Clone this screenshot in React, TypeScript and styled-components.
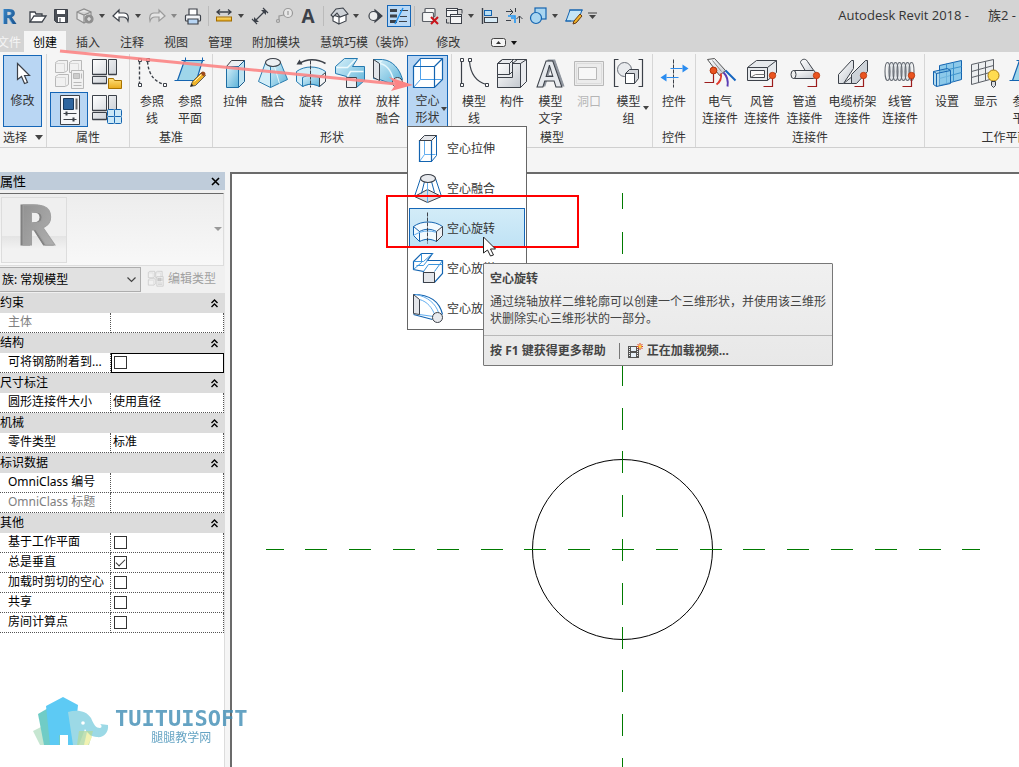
import React from "react";
import styled, { createGlobalStyle, css } from "styled-components";

const Global = createGlobalStyle`
  *, *::before, *::after { box-sizing: border-box; }
  body {
    margin: 0;
    background: #f5f5f5;
    color: #333;
    font: 12px/17px "Open Sans", "Noto Sans CJK SC", sans-serif;
  }
  button, select, input { font: inherit; color: inherit; margin: 0; padding: 0; border-radius: 0; }
  button { background: none; border: 0; }
`;

/* ---------- icons ---------- */

const dark = "#3c4149";
const blue = "#1464b0";

const HiddenSvg = styled.svg`
  position: absolute;
  width: 0;
  height: 0;
`;

const Defs = () => (
  <HiddenSvg aria-hidden="true">
    <defs>
      <linearGradient id="aqua" x1="0" y1="0" x2="1" y2="1">
        <stop offset="0" stopColor="#d8f1fa" />
        <stop offset="1" stopColor="#5cb2d8" />
      </linearGradient>
      <linearGradient id="steel" x1="0" y1="0" x2="1" y2="1">
        <stop offset="0" stopColor="#ffffff" />
        <stop offset="1" stopColor="#c3c8cf" />
      </linearGradient>
      <linearGradient id="gold" x1="0" y1="0" x2="0" y2="1">
        <stop offset="0" stopColor="#ffe07a" />
        <stop offset="1" stopColor="#e9ab1c" />
      </linearGradient>
      <linearGradient id="logoBlue" x1="0" y1="0" x2="1" y2="1">
        <stop offset="0" stopColor="#3f8fd0" />
        <stop offset="1" stopColor="#164c86" />
      </linearGradient>
      <linearGradient id="logoGray" x1="0" y1="0" x2="1" y2="1">
        <stop offset="0" stopColor="#8a8a8a" />
        <stop offset="1" stopColor="#b4b4b4" />
      </linearGradient>
    </defs>
  </HiddenSvg>
);

const connector = (x: number, y: number) => (
  <>
    <path d={`M${x} ${y}v11h-9`} fill="none" stroke="#9c1c1c" strokeWidth="1.2" />
    <circle cx={x} cy={y} r="3.2" fill="#ea5420" stroke="#b23208" strokeWidth=".8" />
  </>
);

const panes = (
  <g fill="url(#steel)" stroke={dark}>
    <path d="M1 1h14v15H1zM17 1h8v15h-8zM1 25v-7h14v7z" />
    <path d="M1 16h14M17 16h8M1 25h14" strokeWidth="1.600" />
  </g>
);

const lineEnds = (
  <g fill="#fff">
    <path d="M2 1h3v3H2zM2 26h3v3H2zM10 1h3v3h-3zM27 26h3v3h-3z" />
  </g>
);

const icons: Record<string, React.ReactNode> = {
  open: (
    <g fill="#fff" stroke={dark} strokeWidth="1.3">
      <path d="M3 16V6h5l1 2h6v3" />
      <path d="M3 16l4-6h12l-4 6z" />
    </g>
  ),
  save: (
    <>
      <path d="M3.500 3.500h13v13h-11l-2-2z" fill="#4b4f56" stroke={dark} />
      <rect x="6" y="4" width="8" height="4" fill="#fff" />
      <rect x="7" y="11" width="7" height="5" fill="#fff" />
      <path d="M9 12v4" stroke={dark} />
    </>
  ),
  sync: (
    <g fill="#e4e4e4" stroke="#8d8d8d" strokeWidth="1.2">
      <path d="M2 6l7-3 7 3v7l-7 4-7-4zM2 6l7 3 7-3M9 9v8" />
      <circle cx="14" cy="13" r="4" fill="#8f8f8f" />
      <path d="M12 13h4M14 11v4" stroke="#eee" />
    </g>
  ),
  undo: <path d="M2 10l6-6v3h5c4 0 5 4 4 8-1-3-2-4-5-4H8v4z" fill="#fff" stroke={dark} strokeWidth="1.2" />,
  redo: <path d="M18 10l-6-6v3H7c-4 0-5 4-4 8 1-3 2-4 5-4h4v4z" fill="#e4e4e4" stroke="#9b9b9b" strokeWidth="1.2" />,
  print: (
    <g stroke={dark} strokeWidth="1.2">
      <path d="M6 9V3h8v6" fill="#fff" />
      <rect x="2.500" y="9" width="15" height="6" rx="1" fill="#f4f6f9" />
      <path d="M5 13h10v5H5z" fill="#b9d6f4" />
    </g>
  ),
  measure: (
    <>
      <path d="M3 6h14M6 3.500L3 6l3 2.500M14 3.500L17 6l-3 2.500" fill="none" stroke={dark} strokeWidth="1.3" />
      <rect x="2.500" y="11" width="15" height="4" fill="url(#gold)" stroke="#a06b00" />
    </>
  ),
  dimension: (
    <>
      <path d="M5 15L15 5M2 13l5 5M13 2l5 5" fill="none" stroke={dark} strokeWidth="1.2" />
      <path d="M4 16v-5l5 5zM16 4v5l-5-5z" fill={dark} />
    </>
  ),
  tag: (
    <g fill="none" stroke="#999" strokeWidth="1.2">
      <circle cx="14" cy="7" r="4.500" fill="#e6e6e6" />
      <path d="M14 5v4M10 9L5 10v4" />
      <circle cx="4" cy="15" r="1.500" />
    </g>
  ),
  text: (
    <text x="10" y="17" textAnchor="middle" fontFamily="Open Sans" fontWeight="700" fontSize="19" fill={dark}>
      A
    </text>
  ),
  house: (
    <g stroke={dark} strokeWidth="1.1" fill="#fff">
      <path d="M4 9v6l6 3v-7zM10 11l7-3v7l-7 3z" />
      <path d="M2 9l5-6 7-1 5 6-8 3-3-4-4 4z" fill="#cfd3d8" />
    </g>
  ),
  section: (
    <g stroke={dark} strokeWidth="1.2">
      <path d="M10 4l7 6-7 6z" fill={dark} />
      <circle cx="8.500" cy="10" r="4.500" fill="#eee" />
    </g>
  ),
  thin: (
    <>
      <path d="M1 4.500h7M1 10h7M1 15.500h7" stroke={dark} strokeWidth="3" />
      <path d="M11 4.500h8M11 10.500h7M10 15.500h8" stroke={dark} />
      <path d="M6 18L14 2" stroke="#1d8dea" strokeWidth="1.4" />
    </>
  ),
  closeHidden: (
    <>
      <g fill="#f5f5f5" stroke="#5b5f66" strokeWidth="1.2">
        <rect x="5" y="2.500" width="10" height="8" rx="1" />
        <rect x="2.500" y="6.500" width="11" height="9" rx="1" />
      </g>
      <path d="M11 11l7 7M18 11l-7 7" stroke="#c9141b" strokeWidth="2" />
    </>
  ),
  switchWin: (
    <g fill="#f5f5f5" stroke={dark}>
      <rect x="2.500" y="2.500" width="11" height="8" />
      <path d="M2.500 4.500h11" />
      <rect x="6.500" y="8.500" width="11" height="9" />
      <path d="M6.500 10.500h11M2.500 13v4h3M14 3.500h4v4" fill="none" />
    </g>
  ),
  align: (
    <>
      <path d="M2.500 2v16" stroke={dark} strokeWidth="1.400" />
      <rect x="4.500" y="4.500" width="7" height="5" fill="#b9dff4" stroke={blue} />
      <rect x="4.500" y="11.500" width="13" height="5" fill="#d8ebf6" stroke={dark} />
    </>
  ),
  offset: (
    <>
      <path d="M2 5.500h7M6 3l3 3-3 3M15.500 17v-7M12.500 13l3-3 3 3M11.500 2v4M2 14.500h5" fill="none" stroke={dark} />
      <path d="M4 10h7v7M7 12h3" fill="none" stroke="#2196f3" strokeWidth="1.600" />
    </>
  ),
  join: (
    <g fill="#a9d5f0" stroke={blue} strokeWidth="1.200">
      <rect x="7" y="2" width="11" height="11" />
      <circle cx="8" cy="12" r="5.500" />
    </g>
  ),
  plane20: (
    <>
      <path d="M2 15L6 4h12l-4 11z" fill="#c5e6f6" stroke={blue} />
      <path d="M1 15h6M5 4h14" stroke={blue} />
      <path d="M9 18l1-3 6-7 2 2-6 7z" fill="#f0b429" stroke="#6a3a10" />
    </>
  ),
  modify: <path d="M10 6v16l4-3 3 7 3-1-3-7h5z" fill="#fff" stroke={dark} strokeWidth="1.200" />,
  types: (
    <g fill="#f1f1f1" stroke="#b9b9b9">
      <path d="M2 4l3-2h9v10l-3 2H2zM16 4l3-2h9v10l-3 2h-9zM2 18l3-2h10v10l-3 2H2z" />
      <path d="M2 5h9v9M16 5h9v9M2 19h10v9" fill="none" stroke="#d8d8d8" />
      <path d="M18 12h12v18H18z" />
      <path d="M20 15h6v5h-6z" fill="#ccc" />
      <path d="M20 24h8M20 27h8M28 15v5" />
    </g>
  ),
  family: (
    <>
      {panes}
      <path d="M17 20h5l1 2h7v8H17z" fill="url(#gold)" stroke="#a87300" />
    </>
  ),
  props: (
    <>
      <path d="M7 1h19v29H7z" fill="#f5f6f9" stroke={dark} />
      <path d="M10 4h10v11H10z" fill="#2f66a0" stroke="#17395e" />
      <path d="M23 4v11" stroke="#666" strokeWidth="2" />
      <path d="M10 19h13M10 25h13" stroke={dark} />
      <path d="M13 17v4M20 23v4" stroke={dark} strokeWidth="2" />
    </>
  ),
  categories: (
    <>
      {panes}
      <g fill="#cbe8f7" stroke={blue}>
        <rect x="16" y="15" width="7" height="7" rx="1" />
        <rect x="23" y="15" width="7" height="7" rx="1" />
        <rect x="16" y="22" width="7" height="7" rx="1" />
        <rect x="23" y="22" width="7" height="7" rx="1" />
      </g>
    </>
  ),
  refLine: (
    <g fill="none" stroke={dark}>
      <path d="M3 4v22M11 4c1 12 6 20 17 23" strokeDasharray="3 2" strokeWidth="1.400" />
      {lineEnds}
    </g>
  ),
  refPlane: (
    <>
      <path d="M3 23L10 3h18l-6 20z" fill="#9fd6ea" stroke={blue} strokeWidth="1.200" />
      <path d="M0 23h6M7 3h23M11 0v4M28 0v4" stroke={blue} />
      <path d="M16 29l2-5 9-9 4 3-10 10z" fill="#f0b429" stroke={dark} strokeWidth=".8" />
      <path d="M26 16l2-2q3 0 3 3l-2 2z" fill="#9c4a1c" />
      <path d="M16 29l1-3 2 2z" fill="#222" />
      <path d="M20 24l7-7" stroke="#fff3c0" />
    </>
  ),
  extrude: (
    <g stroke={dark}>
      <path d="M7 9l5-6h13l-6 6z" fill="#eceff2" />
      <path d="M19 9l6-6v21l-6 6z" fill="#bfe4f2" stroke="#1d5c8c" />
      <path d="M7 9h12v21H7z" fill="url(#aqua)" stroke="#1d6ea4" />
    </g>
  ),
  blend: (
    <g stroke="#2c7cae">
      <path d="M8 5L1 24l12 6V9z" fill="#d3eef8" />
      <path d="M13 9v21l17-8-7-17z" fill="url(#aqua)" />
      <path d="M17 9l5 17" stroke="#e8f8fc" />
      <ellipse cx="15.500" cy="5" rx="7.500" ry="4" fill="#eceff2" stroke={dark} strokeWidth="1.200" />
    </g>
  ),
  revolve: (
    <>
      <path d="M1 14c8-6 21-6 29 0v10l-6 5c-6-3-11-3-17 0l-6-5z" fill="#d3eef8" stroke="#2479b0" />
      <path d="M7 20c6-3 11-3 17 0v9c-6-3-11-3-17 0z" fill="url(#aqua)" stroke="#2479b0" />
      <path d="M24 20l6-5v9l-6 5z" fill="#f2f4f6" stroke={dark} />
      <path d="M15 3v27" stroke={dark} strokeDasharray="4 1" />
      <path d="M30 6C22 1 11 1 4 6" fill="none" stroke={dark} strokeWidth="1.600" />
      <path d="M1 7l3-5 3 5z" fill={dark} />
    </>
  ),
  sweep: (
    <>
      <path d="M10 1h13l-5 8h12v14l-8 7H12V19L1 16V9z" fill="url(#aqua)" stroke="#2479b0" />
      <path d="M2 10h11l8-8M13 19l3-5h13" fill="none" stroke="#eefafd" strokeWidth="1.600" />
      <path d="M12 20h10v10H12z" fill="#eef0f3" stroke={dark} />
    </>
  ),
  sweptBlend: (
    <>
      <path d="M1 2h9c10 1 17 9 20 20l-9 5L7 22l-6-1z" fill="url(#aqua)" stroke="#2479b0" />
      <path d="M7 6c8 1 12 9 14 16M7 6l2-3" fill="none" stroke="#e6f7fc" strokeWidth="1.400" />
      <path d="M1 2l6 4v17l-6-3z" fill="#e2e5e9" stroke={dark} />
      <circle cx="25" cy="25" r="5" fill="#dfe3e8" stroke={dark} />
    </>
  ),
  hollowCube: (
    <>
      <path d="M8 1h22v21l-8 8H1V9z" fill="#fff" />
      <path d="M8 2v20h21M8 22l-7 8" fill="none" stroke="#4da0ea" />
      <path d="M1 9l7-8h22v21l-8 8H1zM1 9h21v21M22 9l8-8" fill="none" stroke={blue} strokeWidth="1.200" />
    </>
  ),
  hExtrude: (
    <>
      <path d="M12 3v19h11M12 22l-5 7" fill="none" stroke="#62aef0" />
      <path d="M7 8h12v21H7z" fill="none" stroke={blue} strokeWidth="1.200" />
      <path d="M19 8l5-5v20l-5 6z" fill="none" stroke={blue} />
      <path d="M7 8l5-5h12l-5 5z" fill="#e4e6ea" stroke={dark} />
    </>
  ),
  hBlend: (
    <>
      <path d="M2 24l13-7 14 7-14 6z" fill="#dcdfe4" stroke={dark} />
      <path d="M8 6L2 24M23 6l6 18M12 9L9 21M19 9l3 11" fill="none" stroke={blue} />
      <path d="M15 10v20" stroke="#62aef0" />
      <ellipse cx="15.500" cy="6" rx="7.500" ry="4" fill="#e8eaee" stroke={dark} strokeWidth="1.200" />
    </>
  ),
  hRevolve: (
    <>
      <path d="M1 14c8-6 21-6 29 0v9l-6 6c-6-3-11-3-17 0l-6-6z" fill="#f2fafe" stroke={blue} />
      <path d="M1 14l6 5v10M7 19c6-3 11-3 17 0" fill="none" stroke={blue} />
      <path d="M1 23c9-6 20-6 29 0" fill="none" stroke="#62aef0" />
      <path d="M24 19l6-5v9l-6 6z" fill="#eef0f3" stroke={dark} />
      <path d="M15 0v31" stroke={dark} strokeDasharray="4 1" />
    </>
  ),
  hSweep: (
    <>
      <path d="M9 1h11l-5 7h15v13l-8 9H11V19L1 17V9z" fill="#fff" stroke={blue} strokeWidth="1.200" />
      <path d="M1 9h10l9-8M9 1v9l-8 7M11 19l5-7h14M22 19l8-11M15 8l-4 5H4" fill="none" stroke="#3b94dc" />
      <path d="M11 20h11v10H11z" fill="#e4e6ea" stroke={dark} />
    </>
  ),
  hSwept: (
    <>
      <path d="M1 2c17 0 26 7 29 20M1 22l19 5" fill="none" stroke={blue} strokeWidth="1.200" />
      <path d="M7 7c8 2 13 9 15 15M3 2c12 2 20 9 23 18M7 22l14 2" fill="none" stroke="#62aef0" />
      <path d="M1 2l6 5v15l-6-1z" fill="#e4e6ea" stroke={dark} />
      <circle cx="25" cy="25" r="5" fill="#e8eaee" stroke={dark} />
    </>
  ),
  modelLine: (
    <g fill="none" stroke={dark}>
      <path d="M3 4v22M11 4c1 12 6 20 17 23" strokeWidth="1.200" />
      {lineEnds}
    </g>
  ),
  component: (
    <g stroke={dark} fill="url(#steel)">
      <path d="M1 6l5-4h9l3 0h12v22l-6 6H1z" fill="#e9ebee" />
      <path d="M1 6h12v11H1zM16 6h8v24H1V20h15z" />
      <path d="M13 6l4-4M13 17l3-3V4M1 6l5-4M16 6l5-4M24 6l6-4M24 30l6-6" fill="none" />
    </g>
  ),
  modelText: (
    <text
      x="14"
      y="29"
      textAnchor="middle"
      fontFamily="Open Sans"
      fontWeight="700"
      fontSize="36"
      fill="#e6e9ed"
      stroke={dark}
      filter="drop-shadow(2px -1px 0 #8f959e)"
    >
      A
    </text>
  ),
  opening: (
    <g fill="#ececec" stroke="#b8b8b8">
      <path d="M1 4h29v24H1z" />
      <path d="M5 10h18v12H5z" fill="#f7f7f7" />
      <path d="M3 6h25v20H3z" fill="none" stroke="#dcdcdc" />
    </g>
  ),
  group: (
    <g stroke={dark}>
      <path d="M5 2H1v27h4M25 2h4v27h-4" fill="none" strokeWidth="1.200" />
      <circle cx="11" cy="12" r="7" fill="#e9ebee" stroke="#6b7079" />
      <path d="M12 16l4-4h9v9l-4 5h-9z" fill="#d3d6db" />
      <path d="M12 16h9v10h-9z" fill="#fff" />
    </g>
  ),
  control: (
    <>
      <path d="M15 2v28" stroke={dark} strokeDasharray="4 1" />
      <path d="M12 11h12M8 20h12" stroke="#2a8cf0" strokeWidth="1.200" />
      <path d="M24 7l6 4-6 4zM8 16l-6 4 6 4z" fill="#2a8cf0" />
    </>
  ),
  electric: (
    <>
      <path d="M3 2l7-1 11 12-6 5z" fill="url(#steel)" stroke="#555" />
      <path d="M8 3l9 11" stroke="#888" />
      <path d="M21 13l10 10" stroke="#1565c0" strokeWidth="2" />
      <path d="M19 15c4 4 5 8 4 14" fill="none" stroke="#5b3db4" strokeWidth="2" />
      <path d="M16 16c2 4-1 9-4 11" fill="none" stroke="#e03a2c" strokeWidth="2" />
      <path d="M9 13v12H0" fill="none" stroke="#9c1c1c" strokeWidth="1.200" />
      <circle cx="9" cy="13" r="3.400" fill="#ea5420" stroke="#b23208" />
    </>
  ),
  duct: (
    <>
      <path d="M1 10l9-7h20v12l-9 8H1z" fill="#e6e9ec" stroke={dark} />
      <path d="M1 10h20v13M21 10l9-7" fill="none" stroke={dark} />
      <path d="M4 13h14v7H4z" fill="#fbfbfb" stroke={dark} />
      <path d="M4 20l5-3h9" fill="none" stroke="#777" />
      {connector(26, 18)}
    </>
  ),
  pipe: (
    <>
      <path d="M11 5c0-3 5-5 7-1l9 13h-9z" fill="url(#steel)" stroke={dark} />
      <path d="M4 13h20c4 2 4 7 0 8H4z" fill="url(#steel)" stroke={dark} />
      <ellipse cx="4" cy="17" rx="2.500" ry="4" fill="#eee" stroke={dark} />
      {connector(27, 18)}
    </>
  ),
  tray: (
    <>
      <path d="M6 26l10-8h8l-8 8z" fill="#dfe2e6" stroke={dark} />
      <path d="M1 17L14 3h2v8L6 26H1z" fill="url(#steel)" stroke={dark} />
      <path d="M14 17L28 3h2v11L19 26h-5z" fill="#cdd2d8" stroke={dark} />
      {connector(26, 18)}
    </>
  ),
  conduit: (
    <>
      <path d="M3 5h24v18H3z" fill="#e3e6e9" />
      <g fill="none" stroke="#62676f" strokeWidth="1.100">
        {[3, 7, 11, 15, 19, 23, 27].map((x) => (
          <ellipse key={x} cx={x} cy="14" rx="2.500" ry="9" />
        ))}
      </g>
      {connector(27, 18)}
    </>
  ),
  setPlane: (
    <g fill="#8cc9ea" stroke={blue}>
      <path d="M8 8l22-5v19L8 28z" />
      <path d="M15 6v20M22 5v19M8 14l22-5M8 21l22-6" fill="none" stroke="#3d93cc" />
      <path d="M2 14l14-3 3 2v13l-14 3-3-2z" fillOpacity=".6" />
      <path d="M2 14l3 2 14-3M5 16v13" fill="none" />
    </g>
  ),
  showPlane: (
    <>
      <path d="M1 7l22-5v19L1 27z" fill="#eceef0" stroke="#5b5f66" />
      <path d="M8 6v19M15 4v19M1 14l22-6M1 20l22-6" stroke="#5b5f66" fill="none" />
      <circle cx="23" cy="18" r="5.500" fill="#ffdc50" stroke="#a87b10" />
      <path d="M21 24h4v4l-2 2-2-2z" fill="#d9dce0" stroke={dark} />
    </>
  ),
};

const Glyph = styled.svg`
  flex: none;
  overflow: visible;
`;

/* Large icons sit on the half pixel so that their one-pixel strokes stay crisp. */
const Icon = ({ name, size = 32, box = size }: { name: string; size?: number; box?: number }) => (
  <Glyph width={size} height={size} viewBox={`0 0 ${box} ${box}`} aria-hidden="true">
    {box === 32 ? <g transform="translate(.5 .5)">{icons[name]}</g> : icons[name]}
  </Glyph>
);

const Caret = ({ color = "#444" }: { color?: string }) => (
  <svg width="6" height="4" aria-hidden="true">
    <path d="M0 0h6L3 4z" fill={color} />
  </svg>
);

/* ---------- frame ---------- */

const Window = styled.div`
  position: relative;
  display: flex;
  flex-direction: column;
  min-height: 100vh;
  overflow: hidden;
`;

const TitleBar = styled.header`
  display: flex;
  align-items: center;
  height: 31px;
  background: #d4d4d4;
`;

const Tools = styled.div`
  display: flex;
  align-items: center;
  flex: none;
`;

const QuickButton = styled.button<{ $on?: boolean }>`
  display: flex;
  align-items: center;
  justify-content: center;
  width: 24px;
  height: 22px;
  ${(p) =>
    p.$on &&
    css`
      background: #b9d8f5;
      border: 1px solid #1566b7;
    `}
`;

const DropButton = styled.button`
  display: flex;
  align-items: center;
  width: 12px;
  height: 22px;
  padding-left: 2px;
`;

const Separator = styled.span`
  width: 1px;
  height: 20px;
  margin: 0 3px;
  background: #bbb;
`;

const AppMark = styled.span`
  width: 25px;
  height: 30px;
  flex: none;
`;

const Caption = styled.div`
  display: flex;
  gap: 19px;
  margin-left: auto;
  padding-right: 3px;
  font-size: 13px;
  white-space: nowrap;
`;

const Tabs = styled.nav`
  display: flex;
  height: 21px;
  background: #d4d4d4;
`;

const Tab = styled.button<{ $kind?: "file" | "active" }>`
  flex: none;
  height: 21px;
  padding: 2px 10px 0;
  white-space: nowrap;
  ${(p) => p.$kind === "file" && "margin-left: -13px; padding-right: 3px; color: #f5f5f5;"}
  ${(p) => p.$kind === "active" && "padding: 2px 9px 0; background: #f5f5f5; color: #000;"}
`;

const RibbonToggle = styled.button`
  display: flex;
  align-items: center;
  gap: 5px;
  margin-left: 21px;
  padding-top: 2px;
`;

/* ---------- ribbon ---------- */

const Ribbon = styled.div`
  display: flex;
  height: 96px;
  padding-top: 2px;
  border-bottom: 1px solid #cfcfcf;
`;

const Panel = styled.section`
  display: flex;
  flex-direction: column;
  flex: none;
  padding: 1px 3px 0;
  border-right: 1px solid #d6d6d6;
`;

const PanelBody = styled.div`
  display: flex;
  flex: 1;
`;

const PanelTitle = styled.h2`
  display: flex;
  align-items: center;
  justify-content: center;
  gap: 8px;
  margin: 0;
  height: 19px;
  font-size: 12px;
  font-weight: 400;
  white-space: nowrap;
`;

const Tool = styled.button<{ $w: number; $on?: boolean; $dim?: boolean }>`
  position: relative;
  display: flex;
  flex-direction: column;
  align-items: center;
  gap: 4px;
  width: ${(p) => p.$w}px;
  height: 72px;
  padding-top: 2px;
  line-height: 17px;
  white-space: pre;
  color: ${(p) => (p.$dim ? "#b5b5b5" : "#333")};
  ${(p) =>
    p.$on &&
    css`
      gap: 3px;
      background: #b9d6f3;
      border: 1px solid #1566b7;
      padding-top: 1px;
    `}
`;

const ToolCaret = styled.span`
  position: absolute;
  right: 0;
  top: 51px;
  line-height: 0;
`;

const PropGrid = styled.div`
  display: grid;
  grid-template-columns: 38px 38px;
  grid-template-rows: 37px 35px;
`;

const GridButton = styled.button<{ $on?: boolean }>`
  display: flex;
  align-items: center;
  justify-content: center;
  ${(p) =>
    p.$on &&
    css`
      background: #b9d6f3;
      border: 1px solid #1566b7;
    `}
`;

const MenuAnchor = styled.div`
  position: relative;
`;

const Menu = styled.ul`
  position: absolute;
  left: 0;
  top: 71px;
  z-index: 3;
  width: 120px;
  margin: 0;
  padding: 1px;
  list-style: none;
  background: #fff;
  border: 1px solid #666;
`;

const MenuItem = styled.button<{ $on?: boolean }>`
  display: flex;
  align-items: center;
  gap: 3px;
  width: 100%;
  height: 40px;
  padding-left: 2px;
  border: 1px solid transparent;
  white-space: nowrap;
  ${(p) =>
    p.$on &&
    css`
      background: linear-gradient(#d2ecf8, #bfe2f5);
      border-color: #1566b7;
    `}
`;

const Tip = styled.div`
  position: absolute;
  left: 76px;
  top: 208px;
  z-index: 4;
  width: 350px;
  background: linear-gradient(#f0f0f0, #e8e8e8);
  border: 1px solid #777;
  border-radius: 1px;
  color: #444;
  font-family: "Noto Sans", "Noto Sans CJK SC", sans-serif;
`;

const TipTitle = styled.h3`
  margin: 0;
  padding: 6px 6px 0;
  font-size: 12px;
  font-weight: 700;
`;

const TipText = styled.p`
  margin: 0;
  padding: 6px 5px 8px 6px;
`;

const TipFoot = styled.div`
  display: flex;
  align-items: center;
  height: 30px;
  padding-left: 6px;
  border-top: 1px solid #b8b8b8;
  font-weight: 700;
`;

const TipRule = styled.span`
  width: 1px;
  height: 16px;
  margin: 0 7px 0 13px;
  background: #777;
`;

const TipVideo = styled.span`
  display: flex;
  align-items: center;
  gap: 4px;
`;

/* ---------- properties ---------- */

const Work = styled.main`
  display: flex;
  flex: 1;
  margin-top: 24px;
`;

const Side = styled.aside`
  width: 225px;
  margin-right: 5px;
  flex: none;
  background: linear-gradient(to right, #fff 224px, #dcdcdc 224px);
  font-family: "Noto Sans", "Noto Sans CJK SC", sans-serif;
`;

const SideHead = styled.div`
  display: flex;
  align-items: center;
  justify-content: space-between;
  height: 18px;
  padding-right: 4px;
  background: #bfccda;
  font-size: 13px;
  color: #000;
`;

const IconButton = styled.button`
  display: flex;
  padding: 1px;
`;

const TypeArea = styled.div`
  padding-top: 3px;
  background: #f0f0f0;
`;

const TypeBox = styled.button`
  display: flex;
  align-items: center;
  justify-content: space-between;
  width: 224px;
  height: 73px;
  padding: 0 1px 0 1px;
  border-top: 1px solid #696969;
  border-right: 1px solid #ddd;
  border-bottom: 1px solid #ddd;
  background: linear-gradient(#ededed, #f8f8f8);
`;

const Thumb = styled.span`
  width: 66px;
  height: 66px;
  border: 1px solid #ddd;
  background: linear-gradient(#efefef 0 60%, #e4e4e4 60%, #f2f2f2 80%);
`;

const TypeRow = styled.div`
  display: flex;
  align-items: center;
  height: 27px;
`;

const SelectWrap = styled.label`
  display: flex;
  align-items: center;
  width: 141px;
  height: 25px;
  border: 1px solid #adadad;
  border-left: 0;
  background: #e1e1e1;
  color: #000;
`;

const TypeSelect = styled.select`
  flex: 1;
  height: 23px;
  padding-left: 2px;
  border: 0;
  appearance: none;
  background: transparent;
`;

const Chevron = styled.svg`
  width: 9px;
  height: 6px;
  margin-right: 4px;
`;

const EditType = styled.button`
  display: flex;
  align-items: center;
  gap: 4px;
  margin-left: 6px;
  padding-bottom: 2px;
  color: #a0a0a0;
`;

const Table = styled.table`
  width: 224px;
  table-layout: fixed;
  border-spacing: 0;
  color: #000;
`;

const CatCell = styled.th`
  height: 20px;
  padding: 0;
  background: #dcdcdc;
  font-weight: 400;
  text-align: left;
  line-height: 18px;
`;

const CatInner = styled.div`
  display: flex;
  align-items: center;
  justify-content: space-between;
  padding-right: 5px;
`;

const NameCell = styled.th<{ $dim?: boolean }>`
  height: 20px;
  padding: 0 0 0 8px;
  overflow: hidden;
  border-right: 1px dotted #555;
  border-bottom: 1px dotted #555;
  font-weight: 400;
  text-align: left;
  vertical-align: top;
  line-height: 17px;
  white-space: nowrap;
  color: ${(p) => (p.$dim ? "#808080" : "#000")};
`;

const ValueCell = styled.td<{ $focus?: boolean }>`
  height: 20px;
  padding: 0 2px;
  border-right: 1px dotted #555;
  border-bottom: 1px dotted #555;
  line-height: 0;
  vertical-align: top;
  ${(p) => p.$focus && "outline: 1px solid #000; outline-offset: -1px;"}
`;

const ValueInput = styled.input`
  display: block;
  width: 100%;
  height: 17px;
  border: 0;
  background: transparent;
  line-height: 17px;
`;

const Check = styled.input`
  display: block;
  width: 13px;
  height: 13px;
  margin: 3px 0 0 1px;
  appearance: none;
  border: 1px solid #333;
  background: #fff;
  &:checked::after {
    content: "";
    display: block;
    width: 9px;
    height: 5px;
    margin: 2px 0 0 1px;
    border: solid #333;
    border-width: 0 0 1px 1px;
    transform: rotate(-45deg);
  }
`;

/* ---------- canvas and annotations ---------- */

const View = styled.div`
  flex: 1;
  display: flex;
  min-width: 0;
  border-top: 2px solid #6b6b6b;
  border-left: 2px solid #6b6b6b;
  background: #fff;
`;

const Drawing = styled.svg`
  flex: 1;
  width: 100%;
  min-height: 593px;
`;

const Notes = styled.svg`
  position: absolute;
  left: 0;
  top: 0;
  z-index: 5;
  width: 600px;
  height: 270px;
  pointer-events: none;
`;

const Watermark = styled.div`
  position: absolute;
  left: 33px;
  bottom: 21px;
  z-index: 5;
  display: flex;
  align-items: flex-end;
  gap: 6px;
  opacity: 0.8;
`;

const MarkText = styled.div`
  display: flex;
  flex-direction: column;
  align-items: center;
  color: #3f8db5;
  line-height: 16px;
`;

const MarkName = styled.strong`
  font: 700 22px/22px "DejaVu Sans Mono", monospace;
`;

/* ---------- data ---------- */

type ToolSpec = { icon: string; label: string; w?: number; dim?: boolean; caret?: boolean };

const datum: ToolSpec[] = [
  { icon: "refLine", label: "参照\n线" },
  { icon: "refPlane", label: "参照\n平面" },
];
const forms: ToolSpec[] = [
  { icon: "extrude", label: "拉伸" },
  { icon: "blend", label: "融合" },
  { icon: "revolve", label: "旋转" },
  { icon: "sweep", label: "放样", w: 39 },
  { icon: "sweptBlend", label: "放样\n融合" },
];
const model: ToolSpec[] = [
  { icon: "modelLine", label: "模型\n线" },
  { icon: "component", label: "构件" },
  { icon: "modelText", label: "模型\n文字", w: 39 },
  { icon: "opening", label: "洞口", dim: true },
  { icon: "group", label: "模型\n组", w: 41, caret: true },
];
const connectors: ToolSpec[] = [
  { icon: "electric", label: "电气\n连接件", w: 42 },
  { icon: "duct", label: "风管\n连接件", w: 42 },
  { icon: "pipe", label: "管道\n连接件", w: 43 },
  { icon: "tray", label: "电缆桥架\n连接件", w: 53 },
  { icon: "conduit", label: "线管\n连接件", w: 42 },
];
const planes: ToolSpec[] = [
  { icon: "setPlane", label: "设置" },
  { icon: "showPlane", label: "显示", w: 39 },
  { icon: "refPlane", label: "参照\n平面", w: 39 },
  { icon: "opening", label: "查看器", w: 39 },
];
const menu = [
  ["hExtrude", "空心拉伸"],
  ["hBlend", "空心融合"],
  ["hRevolve", "空心旋转"],
  ["hSweep", "空心放样"],
  ["hSwept", "空心放样融合"],
];

const quick = [
  "open", "save", "sync", "|v", "undo", "|v", "redo", "|v", "print", "|",
  "measure", "|v", "dimension", "tag", "text", "|", "house", "|v", "section", "thin", "|",
  "closeHidden", "switchWin", "|v", "align", "offset", "join", "|v", "plane20",
];

type Row = { name: string; value?: string; check?: boolean; dim?: boolean; focus?: boolean };
const groups: { title: string; rows: Row[] }[] = [
  { title: "约束", rows: [{ name: "主体", value: "", dim: true }] },
  { title: "结构", rows: [{ name: "可将钢筋附着到...", check: false, focus: true }] },
  { title: "尺寸标注", rows: [{ name: "圆形连接件大小", value: "使用直径" }] },
  { title: "机械", rows: [{ name: "零件类型", value: "标准" }] },
  {
    title: "标识数据",
    rows: [
      { name: "OmniClass 编号", value: "" },
      { name: "OmniClass 标题", value: "", dim: true },
    ],
  },
  {
    title: "其他",
    rows: [
      { name: "基于工作平面", check: false },
      { name: "总是垂直", check: true },
      { name: "加载时剪切的空心", check: false },
      { name: "共享", check: false },
      { name: "房间计算点", check: false },
    ],
  },
];

const ToolSet = ({ tools }: { tools: ToolSpec[] }) => (
  <>
    {tools.map((t) => (
      <Tool key={t.icon} $w={t.w ?? 38} $dim={t.dim}>
        <Icon name={t.icon} />
        <span>{t.label}</span>
        {t.caret && <ToolCaret><Caret /></ToolCaret>}
      </Tool>
    ))}
  </>
);

const dashStarts = [-7, -6, -5, -4, -3, -2, -1, 0, 1, 2, 3, 4, 5, 6, 7].map((k) => Math.round(k * 43.8));
const across = "M266 549.500h18M962 549.500h18" + dashStarts.map((d) => `M${612 + d} 549.500h22`).join("");
const down = "M622.500 193v16" + dashStarts.map((d) => `M622.500 ${539 + d}v22`).join("");

export default function App() {
  return (
    <Window>
      <Global />
      <Defs />
      <TitleBar>
        <AppMark>
          <svg width="24" height="30" role="img" aria-label="Revit">
            <text
              x="2"
              y="23"
              fontFamily="Open Sans"
              fontWeight="700"
              fontSize="22"
              fill="url(#logoBlue)"
              filter="drop-shadow(-1px 0 0 #7fb4e0)"
            >
              R
            </text>
          </svg>
        </AppMark>
        <Tools>
          {quick.map((q, i) =>
            q === "|" ? (
              <Separator key={i} />
            ) : q === "|v" ? (
              <DropButton key={i} aria-label="更多">
                <Caret color={i === 7 ? "#888" : "#444"} />
              </DropButton>
            ) : (
              <QuickButton key={i} $on={q === "thin"} aria-label={q}>
                <Icon name={q} size={20} />
              </QuickButton>
            )
          )}
          <DropButton aria-label="自定义快速访问工具栏">
            <svg width="9" height="8"><path d="M0 1h9" stroke="#444" /><path d="M1 3h7L4.500 7z" fill="#444" /></svg>
          </DropButton>
        </Tools>
        <Caption>
          <span>Autodesk Revit 2018 -</span>
          <span>族2 -</span>
        </Caption>
      </TitleBar>
      <Tabs>
        <Tab $kind="file">文件</Tab>
        <Tab $kind="active">创建</Tab>
        <Tab>插入</Tab>
        <Tab>注释</Tab>
        <Tab>视图</Tab>
        <Tab>管理</Tab>
        <Tab>附加模块</Tab>
        <Tab>慧筑巧模（装饰）</Tab>
        <Tab>修改</Tab>
        <RibbonToggle aria-label="最小化功能区">
          <svg width="15" height="9"><rect x=".5" y=".5" width="14" height="8" rx="2" fill="#f5f5f5" stroke="#444" /><path d="M5 6h5L7.500 3z" fill="#333" /></svg>
          <Caret color="#111" />
        </RibbonToggle>
      </Tabs>
      <Ribbon>
        <Panel>
          <PanelBody>
            <Tool $w={39} $on><Icon name="modify" /><span>修改</span></Tool>
          </PanelBody>
          <PanelTitle>选择<svg width="8" height="5"><path d="M0 0h8L4 5z" fill="#444" /></svg></PanelTitle>
        </Panel>
        <Panel>
          <PanelBody>
            <PropGrid>
              <GridButton aria-label="族类型"><Icon name="types" /></GridButton>
              <GridButton aria-label="族类别"><Icon name="family" /></GridButton>
              <GridButton $on aria-label="属性"><Icon name="props" /></GridButton>
              <GridButton aria-label="类型属性"><Icon name="categories" /></GridButton>
            </PropGrid>
          </PanelBody>
          <PanelTitle>属性</PanelTitle>
        </Panel>
        <Panel>
          <PanelBody><ToolSet tools={datum} /></PanelBody>
          <PanelTitle>基准</PanelTitle>
        </Panel>
        <Panel>
          <PanelBody>
            <ToolSet tools={forms} />
            <MenuAnchor>
              <Tool $w={41} $on aria-haspopup="menu" aria-expanded="true">
                <Icon name="hollowCube" />
                <span>{"空心\n形状"}</span>
                <ToolCaret><Caret /></ToolCaret>
              </Tool>
              <Menu>
                {menu.map(([icon, label]) => (
                  <li key={icon}>
                    <MenuItem $on={icon === "hRevolve"}>
                      <Icon name={icon} />
                      <span>{label}</span>
                    </MenuItem>
                  </li>
                ))}
              </Menu>
              <Tip role="tooltip">
                <TipTitle>空心旋转</TipTitle>
                <TipText>通过绕轴放样二维轮廓可以创建一个三维形状，并使用该三维形状删除实心三维形状的一部分。</TipText>
                <TipFoot>
                  <span>按 F1 键获得更多帮助</span>
                  <TipRule />
                  <TipVideo>
                    <svg width="16" height="16" aria-hidden="true">
                      <rect x="1" y="3" width="11" height="12" fill="#555" />
                      <path d="M4 4h5v4H4zM4 10h5v4H4z" fill="#e6f0f8" />
                      <path d="M2.500 4v10M10.500 4v10" stroke="#eee" strokeDasharray="1 1" />
                      <path d="M13 0v7M9.500 3.500h7M10.500 1l5 5M15.500 1l-5 5" stroke="#e0401c" />
                      <circle cx="13" cy="3.500" r="1.500" fill="#ffd83c" />
                    </svg>
                    正在加载视频...
                  </TipVideo>
                </TipFoot>
              </Tip>
            </MenuAnchor>
          </PanelBody>
          <PanelTitle>形状</PanelTitle>
        </Panel>
        <Panel>
          <PanelBody><ToolSet tools={model} /></PanelBody>
          <PanelTitle>模型</PanelTitle>
        </Panel>
        <Panel>
          <PanelBody><ToolSet tools={[{ icon: "control", label: "控件", w: 36 }]} /></PanelBody>
          <PanelTitle>控件</PanelTitle>
        </Panel>
        <Panel>
          <PanelBody><ToolSet tools={connectors} /></PanelBody>
          <PanelTitle>连接件</PanelTitle>
        </Panel>
        <Panel>
          <PanelBody><ToolSet tools={planes} /></PanelBody>
          <PanelTitle>工作平面</PanelTitle>
        </Panel>
      </Ribbon>
      <Work>
        <Side>
          <SideHead>
            <span>属性</span>
            <IconButton aria-label="关闭">
              <svg width="9" height="9"><path d="M1 1l7 7M8 1L1 8" stroke="#000" strokeWidth="1.600" /></svg>
            </IconButton>
          </SideHead>
          <TypeArea>
            <TypeBox aria-label="类型选择器">
              <Thumb>
                <svg width="64" height="64" aria-hidden="true">
                  <text
                    x="16"
                    y="47"
                    fontFamily="Open Sans"
                    fontWeight="700"
                    fontSize="56"
                    fill="url(#logoGray)"
                    stroke="#a0a0a0"
                    filter="drop-shadow(-2px 0 0 #808080)"
                  >
                    R
                  </text>
                </svg>
              </Thumb>
              <svg width="8" height="5"><path d="M0 0h8L4 4z" fill="#999" /></svg>
            </TypeBox>
            <TypeRow>
              <SelectWrap>
                <TypeSelect aria-label="族" defaultValue="a">
                  <option value="a">族: 常规模型</option>
                </TypeSelect>
                <Chevron viewBox="0 0 9 6"><path d="M.500 .500l4 4 4-4" fill="none" stroke="#444" strokeWidth="1.200" /></Chevron>
              </SelectWrap>
              <EditType><Icon name="types" size={17} box={32} />编辑类型</EditType>
            </TypeRow>
          </TypeArea>
          <Table>
            <colgroup><col width="111" /><col /></colgroup>
            <tbody>
              {groups.map((g) => (
                <React.Fragment key={g.title}>
                  <tr>
                    <CatCell colSpan={2}>
                      <CatInner>
                        {g.title}
                        <svg width="9" height="9" aria-hidden="true">
                          <path d="M1.500 4l3-3 3 3M1.500 8l3-3 3 3" fill="none" stroke="#000" strokeWidth="1.400" />
                        </svg>
                      </CatInner>
                    </CatCell>
                  </tr>
                  {g.rows.map((r) => (
                    <tr key={r.name}>
                      <NameCell $dim={r.dim}><label htmlFor={r.name}>{r.name}</label></NameCell>
                      <ValueCell $focus={r.focus}>
                        {r.check === undefined ? (
                          <ValueInput id={r.name} defaultValue={r.value} />
                        ) : (
                          <Check id={r.name} type="checkbox" defaultChecked={r.check} />
                        )}
                      </ValueCell>
                    </tr>
                  ))}
                </React.Fragment>
              ))}
            </tbody>
          </Table>
        </Side>
        <View>
          <Drawing aria-label="参照标高">
            <g transform="translate(-232 -174)" fill="none">
              <circle cx="622.500" cy="549.500" r="90" stroke="#000" />
              <path d={across} stroke="#007a00" />
              <path d={down} stroke="#007a00" />
            </g>
          </Drawing>
        </View>
      </Work>
      <Notes aria-hidden="true">
        <path d="M60 51L396 84" stroke="#fc8585" strokeOpacity=".9" strokeWidth="3" />
        <path d="M389 77l24 8-22 6 5-7z" fill="#fc8585" />
        <rect x="387" y="196" width="191" height="51" fill="none" stroke="#f00" strokeWidth="2" />
        <path d="M483.500 237v16l4-3 3 6 3-1-3-6h5z" fill="#fff" stroke="#222" />
      </Notes>
      <Watermark>
        <svg width="76" height="49" aria-hidden="true">
          <path d="M0 34l12-6 6 20H7z" fill="#b9e0c6" />
          <path d="M5 17l12-7 10 6v32H11z" fill="#4dc0b8" />
          <path d="M13 9L30 0l15 8-4 40h-6V38h-9v10h-9z" fill="#35bdf2" />
          <path d="M35 15c9-3 19-1 23 6 3 7 5 10 9 10 2 0 2-3 0-4l8 1c1 8-5 13-11 12-6 0-10-4-12-8l-6 16H40z" fill="#84d0e0" />
          <path d="M46 34h14l-4 14H44z" fill="#9ed08c" fillOpacity=".8" />
          <path d="M54 35l5 5-4 8h-4z" fill="#eef0a0" />
          <circle cx="50" cy="26" r="1.800" fill="#fff" />
        </svg>
        <MarkText>
          <MarkName>TUITUISOFT</MarkName>
          <span>腿腿教学网</span>
        </MarkText>
      </Watermark>
    </Window>
  );
}
